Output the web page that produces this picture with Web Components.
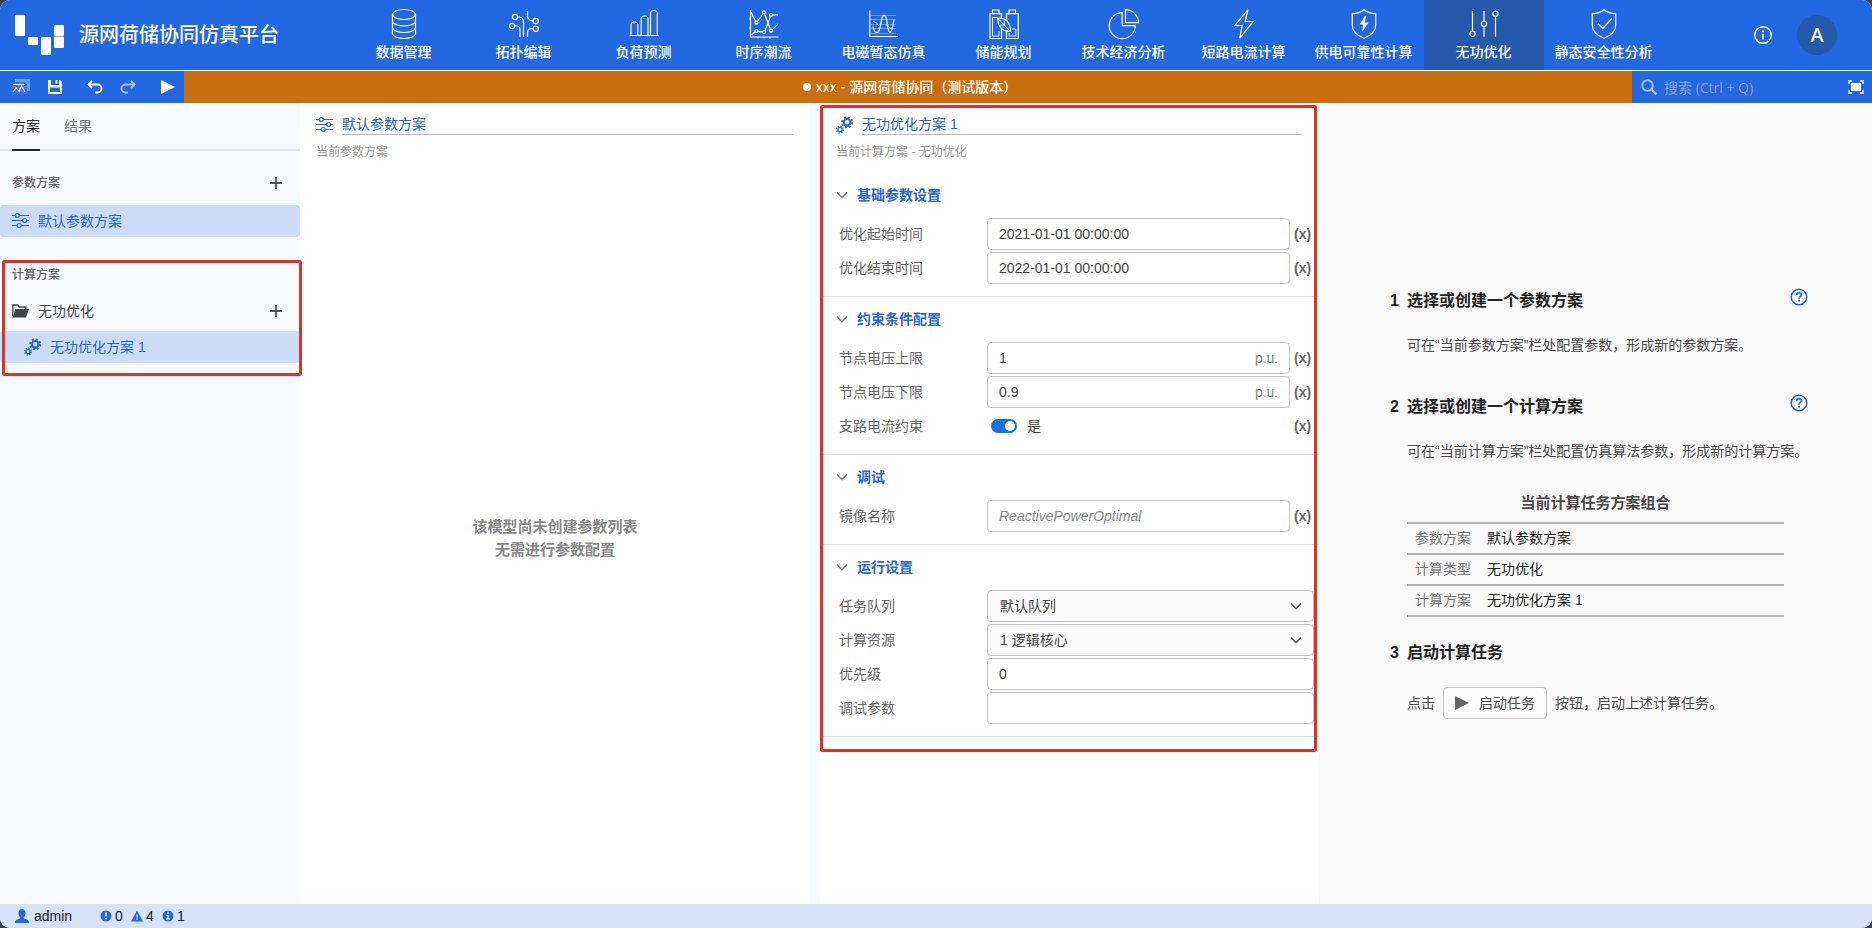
<!DOCTYPE html>
<html lang="zh-CN">
<head>
<meta charset="utf-8">
<title>源网荷储协同仿真平台</title>
<style>
  html, body { margin: 0; height: 100%; }
  body {
    background: #39424f;
    font-family: "Liberation Sans", "Noto Sans CJK SC", sans-serif;
    font-size: 14px;
    line-height: 20px;
    --brand: #2268e1;
    --brand-dark: #2559ac;
    --link: #2a67c9;
    --pick: #cddcf6;
    --mark: #e0302a;
    --line: #dedede;
  }
</style>
</head>
<body>
<sim-app></sim-app>

<script>
const ICONS = {
  logo: ['0 0 50 40', '<g fill="#fff" stroke="none"><rect width="10" height="21" rx="1"/><rect x="13" y="22" width="10" height="8" rx="1"/><rect x="26" y="22" width="10" height="18" rx="1"/><rect x="39" y="10" width="10" height="11" rx="1"/><rect x="39" y="21.500" width="10" height="11.500" rx="1"/></g>'],
  data: ['0 0 30 30', '<ellipse cx="15" cy="5.5" rx="11.5" ry="5"/><path d="M3.500 5.500v19c0 2.800 5.100 5 11.500 5s11.500-2.200 11.500-5v-19M3.500 12c0 2.800 5.100 5 11.500 5s11.500-2.200 11.500-5M3.500 18.500c0 2.800 5.100 5 11.500 5s11.500-2.200 11.500-5"/>'],
  topology: ['0 0 30 30', '<circle cx="6" cy="8" r="2.600"/><circle cx="3.100" cy="17" r="2.600"/><circle cx="26.700" cy="12" r="2.600"/><circle cx="26.700" cy="19.700" r="2.600"/><path d="M8.600 8h1.500q4.400.5 4.400 5v15M5.700 17H8q3 .5 3 4v7M18.500 2v6.500l2.500 2.800 3.100.7M24.100 19.700h-2q-3.600.5-3.600 4V28"/>'],
  bars: ['0 0 30 30', '<path d="M.5 26.500h29M2 26.500V16q0-3 3.400-3T8.800 16v10.500M12.200 26.500V10q0-3 3.400-3T19 10v16.500M21.500 26.500v-22q0-3 3.400-3t3.400 3v22"/>'],
  series: ['0 0 30 30', '<path d="M1.500 1v27h28M9 28v1.500M15 28v1.500M21 28v1.500M.5 10h1M.5 19h1M2 3l4.600 9.500M8.400 12.500 14.200 4.500M15.600 4.700 21.400 20.500M23.200 20.800 29 15M2 26l4.500-3.200M9 22.300l4.500.7M16 22 21.500 7.400M23.700 6H29"/><circle cx="7.500" cy="13.700" r="1.500"/><circle cx="15" cy="3.300" r="1.500"/><circle cx="22" cy="21.700" r="1.500"/><circle cx="7.500" cy="22" r="1.500"/><circle cx="15" cy="23.200" r="1.500"/><circle cx="22" cy="6" r="1.500"/>'],
  wave: ['0 0 30 30', '<path d="M.8 1.500v26H29"/><path stroke-width=".5" opacity=".6" d="M2 6.500h25M2 10.500h25M2 15.500h25M2 19.500h25M2 24.500h25"/><path d="M4 17.500c.8 4 2 6.200 4 6.200 4.500 0 3.200-17.500 7-17.500s3 17.300 6 17.300c2.200 0 3-7.500 4-13"/><path stroke-width=".9" d="M4.500 12.500q3.500.5 5.500 4.500M17.500 16.500q2 .5 3 2t3.500 0"/>'],
  battery: ['0 0 30 30', '<path d="M1 4.700h11.500v24.800H1ZM17.500 4.700h11.800v24.800H17.500ZM3.500 4.500V1h6.500v3.500M20 4.500V1h6.500v3.500"/><path stroke-width=".9" d="M8.500 8.500h-5V27H10v-5M26.800 20v7H20v-3M23 20h3.800"/><path style="fill:var(--brand)" d="M8.800 9.200c8-.6 12.700 4.300 12.700 12.800-8 1-12.700-4.500-12.700-12.800Z"/><path stroke-width=".9" d="m9 9.500 14 14.500M15.500 11.500v4.700h-4.200"/>'],
  pie: ['0 0 30 30', '<path d="M13.200 3.700a13 13 0 1 0 13 13h-13ZM16.500.7v13h13a13 13 0 0 0-13-13Z"/>'],
  bolt: ['0 0 30 30', '<path d="M18.800.8 5.800 16.500h7.400l-2.400 12.700L24.200 12.500h-8Z"/>'],
  shieldBolt: ['0 0 30 30', '<path d="M15 .8q4.500 3.700 11.700 4v11q0 9-11.700 13.500Q3.300 24.800 3.300 15.800v-11Q10.500 4.500 15 .8Z"/><path fill="currentColor" stroke="none" d="m16 7-5.500 8.500h3.700L13 23l6.500-9.500h-4L17.500 7Z"/>'],
  sliders: ['0 0 30 30', '<circle cx="3.500" cy="24.700" r="2.600"/><circle cx="15" cy="14.700" r="2.600"/><circle cx="26.500" cy="4.700" r="2.600"/><path d="M3.500 2v20M15 2v10M15 17.300v10.500M26.500 7.300v20.500"/>'],
  shieldCheck: ['0 0 30 30', '<path d="M15 .8q4.500 3.700 11.700 4v11q0 9-11.700 13.500Q3.300 24.800 3.300 15.800v-11Q10.500 4.500 15 .8ZM9 14.500l4.800 5 9-10"/>'],
  info: ['0 0 20 20', '<circle cx="10" cy="10" r="8.300" stroke-width="1.500"/><path stroke-width="1.800" d="M10 8.800v5.700M10 5.500v1.800"/>'],
  app: ['0 0 20 18', '<path fill="#5fa4f6" stroke="none" d="M4 1h15v12h-3V4H4Z"/><path fill="#3f6fee" stroke="none" d="M1 4h15v12H1Z"/><path stroke="#fff" stroke-width="1.200" d="M2 6.500h12M2 14l3-4 3 3 2.500-5 3.500 6"/>'],
  save: ['0 0 14 14', '<path fill="currentColor" stroke="none" fill-rule="evenodd" d="M0 0h3v5h8V0h1l2 2v12H0ZM7.500 0h2v3.500h-2ZM2 7.500V12h10V7.500Z"/>'],
  undo: ['0 0 16 14', '<path stroke-width="1.900" d="M5 1 1.500 4.500 5 8M1.500 4.500h9a4 4 0 0 1 0 8H8"/>'],
  redo: ['0 0 16 14', '<path stroke-width="1.900" d="m11 1 3.500 3.500L11 8M14.500 4.500h-9a4 4 0 0 0 0 8H8"/>'],
  play: ['0 0 14 14', '<path fill="currentColor" stroke="none" d="M0 0v14l14-7Z"/>'],
  search: ['0 0 16 16', '<circle cx="6.500" cy="6.500" r="5.300" stroke-width="2"/><path stroke-width="2.400" d="m10.500 10.500 4.800 4.800"/>'],
  screen: ['0 0 16 14', '<path stroke-width="1.300" d="M1 4V1h3M12 1h3v3M15 10v3h-3M4 13H1v-3"/><path fill="currentColor" stroke="none" d="M3 3h10v8H3Z"/>'],
  params: ['0 0 17 16', '<path stroke-width="1.100" d="M0 2.500h3.200M7.200 2.500H17M0 7.500h10.700M14.700 7.500H17M0 12.500h5.200M9.200 12.500H17"/><g stroke-width="1.100"><circle cx="5.200" cy="2.500" r="2"/><circle cx="12.700" cy="7.500" r="2"/><circle cx="7.200" cy="12.500" r="2"/></g>'],
  folder: ['0 0 17 14', '<path stroke-width="1.300" d="M.8 12V1h5l1.500 2h6.500v2"/><path fill="currentColor" stroke="none" d="M3.500 5H17l-3 8.500H.5Z"/>'],
  gears: ['0 0 18 18', '<circle cx="11.800" cy="6.200" r="3.500" stroke-width="2.200"/><circle cx="11.800" cy="6.200" r="5.200" stroke-width="2.200" stroke-dasharray="2.100 1.984"/><circle cx="4.200" cy="13.800" r="2.200" stroke-width="1.400"/><circle cx="4.200" cy="13.800" r="3.500" stroke-width="1.500" stroke-dasharray="1.400 1.349"/>'],
  plus: ['0 0 12 12', '<path stroke-width="1.800" d="M6 0v12M0 6h12"/>'],
  chevron: ['0 0 12 8', '<path stroke-width="1.600" d="m1 1.500 5 5 5-5"/>'],
  help: ['0 0 18 18', '<circle cx="9" cy="9" r="7.800" stroke-width="1.500"/><path stroke-width="1.700" d="M6.600 7.200c0-3.600 5-3.100 5-.6 0 1.900-2.500 1.700-2.500 3.900M9.100 12v1.800"/>'],
  user: ['0 0 14 14', '<path fill="currentColor" stroke="none" d="M7 0c2.300 0 3.600 1.700 3.600 4 0 1.700-.8 3.400-1.900 4.200v1.100l4 1.600q1.300.6 1.300 3.100H0q0-2.500 1.300-3.100l4-1.600V8.200C4.200 7.400 3.400 5.700 3.400 4 3.400 1.700 4.700 0 7 0Z"/>'],
  error: ['0 0 12 12', '<circle cx="6" cy="6" r="5.500" fill="currentColor" stroke="none"/><path stroke="#d5e2f8" stroke-width="1.800" d="M6 2.500v4M6 7.700v1.800"/>'],
  warn: ['0 0 12 12', '<path fill="currentColor" stroke="none" d="m6 .5 6 11H0Z"/><path stroke="#d5e2f8" stroke-width="1.400" d="M6 4.500v3M6 8.500V10"/>'],
  note: ['0 0 12 12', '<circle cx="6" cy="6" r="5.500" fill="currentColor" stroke="none"/><path stroke="#d5e2f8" stroke-width="1.500" d="M6 2.300v1.600M4.500 5.500H6v3.300M4.300 9h3.500"/>'],
};

/* Registers an element whose shadow root is cloned from a template. */
function component(name, html, ready) {
  const tpl = document.createElement('template');
  tpl.innerHTML = `<style>*{box-sizing:border-box}button,input,select{font:inherit;color:inherit;margin:0}
    button{background:none;border:0;padding:0;cursor:pointer;display:flex;align-items:center;justify-content:center}
    a{color:inherit;text-decoration:none}</style>` + html;
  customElements.define(name, class extends HTMLElement {
    connectedCallback() {
      if (this.shadowRoot) return;
      const root = this.attachShadow({ mode: 'open' });
      const content = tpl.content.cloneNode(true);
      if (ready) ready(this, content);
      root.append(content);
    }
  });
}

component('ui-icon', `<style>
  :host { display: inline-flex; flex: none; width: 16px; height: 16px; }
  svg { width: 100%; height: 100%; fill: none; stroke: currentColor; stroke-width: 1.2; overflow: visible; }
</style><svg aria-hidden="true"></svg>`, (el, root) => {
  const svg = root.querySelector('svg');
  const [box, art] = ICONS[el.getAttribute('name')];
  svg.setAttribute('viewBox', box);
  svg.innerHTML = art;
});

component('nav-item', `<style>
  :host { display: block; flex: 0 1 120px; }
  a { display: flex; flex-direction: column; align-items: center; gap: 3px; height: 70px; padding: 9px 1px 0 0;
      color: #fff; font-weight: 500; white-space: nowrap; }
  :host([active]) a { background: var(--brand-dark); }
  ui-icon { width: 30px; height: 30px; }
</style><a href="#"><ui-icon></ui-icon><span><slot></slot></span></a>`, (el, root) => {
  root.querySelector('ui-icon').setAttribute('name', el.getAttribute('icon'));
});

component('app-header', `<style>
  :host { display: flex; height: 71px; background: var(--brand); border-bottom: 1px solid #fff; color: #fff; }
  .brand { display: flex; align-items: center; gap: 14px; flex: 0 0 344px; padding-left: 15px; }
  .brand ui-icon { width: 50px; height: 40px; }
  h1 { margin: 0; font-size: 20px; line-height: 28px; font-weight: 500; }
  nav { display: flex; flex: 1; }
  .tools { display: flex; align-items: center; gap: 24px; padding-right: 35px; }
  .tools ui-icon { width: 20px; height: 20px; }
  .avatar { width: 40px; height: 40px; border-radius: 50%; background: var(--brand-dark);
            font-family: "Noto Sans"; font-size: 20px; line-height: 28px; font-weight: 500; }
</style>
<div class="brand"><ui-icon name="logo"></ui-icon><h1>源网荷储协同仿真平台</h1></div>
<nav>
  <nav-item icon="data">数据管理</nav-item>
  <nav-item icon="topology">拓扑编辑</nav-item>
  <nav-item icon="bars">负荷预测</nav-item>
  <nav-item icon="series">时序潮流</nav-item>
  <nav-item icon="wave">电磁暂态仿真</nav-item>
  <nav-item icon="battery">储能规划</nav-item>
  <nav-item icon="pie">技术经济分析</nav-item>
  <nav-item icon="bolt">短路电流计算</nav-item>
  <nav-item icon="shieldBolt">供电可靠性计算</nav-item>
  <nav-item icon="sliders" active>无功优化</nav-item>
  <nav-item icon="shieldCheck">静态安全性分析</nav-item>
</nav>
<div class="tools">
  <button aria-label="关于"><ui-icon name="info"></ui-icon></button>
  <button class="avatar">A</button>
</div>`);

component('app-toolbar', `<style>
  :host { display: flex; height: 32px; background: #c96f10; color: #fff; }
  .actions { display: flex; align-items: center; gap: 25px; width: 184px; padding-left: 11px; background: var(--brand); }
  .actions ui-icon { width: 16px; height: 14px; }
  .actions .app { width: 20px; height: 18px; }
  .actions .square { width: 14px; }
  .actions .pair { display: flex; align-items: center; gap: 17px; }
  .actions button[disabled] { opacity: .6; }
  .title { flex: 1; display: flex; align-items: center; justify-content: center; gap: 5px; padding-left: 4px; font-weight: 500; }
  .title i { width: 8px; height: 8px; border-radius: 50%; background: #fff; }
  .search { display: flex; align-items: center; width: 240px; padding: 0 8px 0 9px; background: var(--brand); color: #a5bfec; }
  .search label { display: flex; padding-right: 7px; }
  input { flex: 1; min-width: 0; height: 24px; margin-right: 16px; padding: 0; border: 0; outline: 0; background: none;
          font-family: "Open Sans", "Noto Sans CJK SC", sans-serif; }
  input::placeholder { color: #8f9fc4; opacity: 1; }
  .search button { color: #fff; }
  .search button ui-icon { height: 14px; }
</style>
<div class="actions">
  <div class="pair">
    <button aria-label="应用"><ui-icon class="app" name="app"></ui-icon></button>
    <button aria-label="保存"><ui-icon class="square" name="save"></ui-icon></button>
  </div>
  <div class="pair">
    <button aria-label="撤销"><ui-icon name="undo"></ui-icon></button>
    <button aria-label="重做" disabled><ui-icon name="redo"></ui-icon></button>
  </div>
  <button aria-label="运行"><ui-icon class="square" name="play"></ui-icon></button>
</div>
<div class="title"><i></i><span>xxx - 源网荷储协同（测试版本）</span></div>
<div class="search">
  <label for="q" aria-label="搜索"><ui-icon name="search"></ui-icon></label>
  <input id="q" type="text" placeholder="搜索 (Ctrl + Q)">
  <button aria-label="全屏"><ui-icon name="screen"></ui-icon></button>
</div>`);

component('mark-box', `<style>
  :host { position: absolute; border: 3px solid var(--mark); border-radius: 3px; box-sizing: border-box; pointer-events: none; }
</style>`);

component('tree-row', `<style>
  :host { display: flex; align-items: center; box-sizing: border-box; height: 32px; padding: 0 18px 0 12px; color: #444; }
  :host([level="2"]) { padding-left: 24px; }
  :host([picked]) { background: var(--pick); color: var(--link); border-radius: 4px; }
  .main { flex: 1; justify-content: flex-start; gap: 9px; }
</style><button class="main"><slot name="icon"></slot><slot></slot></button><slot name="end"></slot>`);

component('side-panel', `<style>
  :host { display: block; position: relative; background: #f7f9fd; color: #444; }
  .tabs { display: flex; gap: 24px; height: 48px; padding: 0 12px; border-bottom: 2px solid #e6e7ea; color: #777; }
  .tabs button { height: 48px; border-bottom: 2px solid transparent; }
  .tabs [aria-selected=true] { color: #222; border-color: #222; }
  .group { display: flex; align-items: center; justify-content: space-between; height: 32px; padding: 0 18px 0 12px;
           font-size: 12px; font-weight: 500; color: #666; }
  .params { margin-top: 16px; }
  .calcs { margin-top: 22px; }
  tree-row { margin-top: 6px; }
  .calcs + tree-row, .calcs + tree-row + tree-row { margin-top: 4px; }
  ui-icon { width: 17px; }
  ui-icon[name=gears] { height: 18px; }
  .plus { width: 12px; height: 12px; color: #555; }
  mark-box { left: 2px; right: -2px; top: 157px; height: 116px; }
</style>
<div class="tabs" role="tablist">
  <button role="tab" aria-selected="true">方案</button>
  <button role="tab" aria-selected="false">结果</button>
</div>
<div class="group params">参数方案<button aria-label="新建参数方案"><ui-icon class="plus" name="plus"></ui-icon></button></div>
<tree-row picked><ui-icon slot="icon" name="params"></ui-icon>默认参数方案</tree-row>
<div class="group calcs">计算方案</div>
<tree-row><ui-icon slot="icon" name="folder"></ui-icon>无功优化<button slot="end" aria-label="新建计算方案"><ui-icon class="plus" name="plus"></ui-icon></button></tree-row>
<tree-row picked level="2"><ui-icon slot="icon" name="gears"></ui-icon>无功优化方案 1</tree-row>
<mark-box></mark-box>`);

component('scheme-head', `<style>
  :host { display: block; padding: 11px 17px 0 16px; color: #999; font-size: 12px; }
  .top { display: flex; align-items: center; gap: 9px; color: var(--link); font-size: 14px; }
  .name { flex: 1; border-bottom: 1px solid #bbb; }
  .note { padding-top: 7px; }
</style>
<div class="top"><slot name="icon"></slot><div class="name"><slot></slot></div></div>
<div class="note"><slot name="note"></slot></div>`);

component('param-section', `<style>
  :host { display: block; padding-bottom: 12px; border-bottom: 1px solid var(--line); }
  button { gap: 9px; height: 44px; margin-bottom: 1px; padding-left: 16px; color: var(--link); font-weight: 700; }
  ui-icon { width: 12px; height: 8px; color: #888; }
  .rows { display: grid; gap: 2px; }
</style>
<button aria-expanded="true"><ui-icon name="chevron"></ui-icon><span></span></button>
<div class="rows"><slot></slot></div>`, (el, root) => {
  root.querySelector('span').textContent = el.getAttribute('heading');
});

component('param-field', `<style>
  :host { display: grid; grid-template-columns: 148px 1fr 29px; align-items: center; height: 32px; padding-left: 19px; }
  :host([wide]) { grid-template-columns: 148px 1fr; padding-right: 5px; }
  label { padding-bottom: 1px; color: #666; }
  .box { display: flex; align-items: center; height: 32px; border: 1px solid #c4c4c4; border-radius: 4px; color: #444; background: #fff; }
  .box input { flex: 1; min-width: 0; height: 30px; padding: 0 11px 1px; border: 0; outline: 0; background: none; }
  .box input::placeholder { font-style: italic; color: #888; opacity: 1; }
  .unit { padding-right: 11px; color: #888; font-family: Roboto, sans-serif; }
  .pick { background: #fafafa; display: grid; align-items: center; }
  .pick > * { grid-area: 1 / 1; }
  .pick ui-icon { justify-self: end; width: 12px; height: 8px; margin-right: 11px; color: #666; pointer-events: none; }
  select { appearance: none; height: 30px; padding: 0 12px; border: 0; outline: 0; background: none; }
  .toggle { display: flex; align-items: center; gap: 10px; padding-left: 4px; color: #444; }
  .toggle input { appearance: none; width: 26px; height: 14px; border-radius: 7px; background: #999; display: flex; padding: 2px; }
  .toggle input:checked { background: #1a70e0; justify-content: flex-end; }
  .toggle input::before { content: ""; width: 10px; height: 10px; border-radius: 50%; background: #fff; }
  .expr { height: 32px; padding-left: 4px; justify-content: flex-start; color: #666; font-weight: 700; }
</style>
<label for="f"></label>`, (el, root) => {
  const get = k => el.getAttribute(k) || '';
  root.querySelector('label').textContent = get('label');
  const body = {
    select: `<div class="box pick"><select id="f"><option>${get('value')}</option></select><ui-icon name="chevron"></ui-icon></div>`,
    toggle: `<div class="toggle"><input id="f" type="checkbox" role="switch" checked><span>${get('value')}</span></div>`,
  }[get('kind')] || `<div class="box"><input id="f" type="text" value="${get('value')}" placeholder="${get('hint')}">${
    get('unit') ? `<span class="unit">${get('unit')}</span>` : ''}</div>`;
  const t = document.createElement('template');
  t.innerHTML = body + (el.hasAttribute('wide') ? '' : '<button class="expr" title="表达式">(x)</button>');
  root.append(t.content);
});

component('param-panel', `<style>
  :host { display: flex; flex-direction: column; background: #fff; }
  .empty { flex: 1; display: flex; align-items: center; justify-content: center; text-align: center;
           padding-top: 10px; color: #888; font-size: 15px; font-weight: 700; line-height: 23px; }
  ui-icon { width: 17px; }
</style>
<scheme-head><ui-icon slot="icon" name="params"></ui-icon>默认参数方案<span slot="note">当前参数方案</span></scheme-head>
<div class="empty">该模型尚未创建参数列表<br>无需进行参数配置</div>`);

component('calc-panel', `<style>
  :host { display: block; position: relative; background: #fff; }
  .form { padding-top: 11px; }
  ui-icon { width: 17px; height: 18px; }
  mark-box { left: 0; right: 2px; top: 2px; height: 647px; }
</style>
<scheme-head><ui-icon slot="icon" name="gears"></ui-icon>无功优化方案 1<span slot="note">当前计算方案 - 无功优化</span></scheme-head>
<div class="form">
  <param-section heading="基础参数设置">
    <param-field label="优化起始时间" value="2021-01-01 00:00:00"></param-field>
    <param-field label="优化结束时间" value="2022-01-01 00:00:00"></param-field>
  </param-section>
  <param-section heading="约束条件配置">
    <param-field label="节点电压上限" value="1" unit="p.u."></param-field>
    <param-field label="节点电压下限" value="0.9" unit="p.u."></param-field>
    <param-field label="支路电流约束" kind="toggle" value="是"></param-field>
  </param-section>
  <param-section heading="调试">
    <param-field label="镜像名称" hint="ReactivePowerOptimal"></param-field>
  </param-section>
  <param-section heading="运行设置">
    <param-field wide label="任务队列" kind="select" value="默认队列"></param-field>
    <param-field wide label="计算资源" kind="select" value="1 逻辑核心"></param-field>
    <param-field wide label="优先级" value="0"></param-field>
    <param-field wide label="调试参数"></param-field>
  </param-section>
</div>
<mark-box></mark-box>`);

component('guide-step', `<style>
  :host { display: grid; grid-template-columns: 17px 1fr 18px; align-items: start; }
  h2 { margin: 0; font-size: 16px; line-height: 32px; color: #222; }
  .no { color: #222; font-size: 16px; line-height: 32px; font-weight: 700; }
  .help { margin-top: 3px; color: #1f63bd; }
  .help ui-icon { width: 18px; height: 18px; }
  :host([plain]) .help { visibility: hidden; }
  .body { grid-column: 2 / 4; }
</style>
<span class="no"></span><h2></h2><button class="help" aria-label="帮助"><ui-icon name="help"></ui-icon></button>
<div class="body"><slot></slot></div>`, (el, root) => {
  root.querySelector('.no').textContent = el.getAttribute('no');
  root.querySelector('h2').textContent = el.getAttribute('heading');
});

component('guide-panel', `<style>
  :host { display: flex; flex-direction: column; justify-content: center; background: #f9f9f9; color: #4a4a4a; padding: 0 64px 3px 71px; }
  p { margin: 0; line-height: 32px; white-space: nowrap; }
  guide-step p { padding-top: 12px; }
  guide-step + guide-step { margin-top: 30px; }
  table { width: calc(100% - 24px); margin-top: 26px; border-collapse: collapse; }
  caption { padding-bottom: 9px; font-size: 15px; line-height: 20px; font-weight: 700; }
  th, td { height: 31px; padding: 0 8px 2px; text-align: left; border: 2px solid #b3b3b3; border-width: 2px 0; }
  th { width: 72px; font-weight: 400; color: #777; }
  td { color: #222; }
  guide-step + guide-step.last { margin-top: 20px; }
  .run { display: flex; align-items: center; gap: 8px; margin-top: 18px; }
  .run button { gap: 10px; height: 32px; padding: 0 11px; border: 1px solid #c4c4c4; border-radius: 4px; background: #fcfcfc; }
  .run button ui-icon { width: 14px; height: 14px; color: #666; }
</style>
<guide-step no="1" heading="选择或创建一个参数方案"><p>可在“当前参数方案”栏处配置参数，形成新的参数方案。</p></guide-step>
<guide-step no="2" heading="选择或创建一个计算方案">
  <p>可在“当前计算方案”栏处配置仿真算法参数，形成新的计算方案。</p>
  <table>
    <caption>当前计算任务方案组合</caption>
    <tr><th scope="row">参数方案</th><td>默认参数方案</td></tr>
    <tr><th scope="row">计算类型</th><td>无功优化</td></tr>
    <tr><th scope="row">计算方案</th><td>无功优化方案 1</td></tr>
  </table>
</guide-step>
<guide-step class="last" plain no="3" heading="启动计算任务">
  <div class="run"><span>点击</span><button><ui-icon name="play"></ui-icon>启动任务</button><span>按钮，启动上述计算任务。</span></div>
</guide-step>`);

component('status-bar', `<style>
  :host { display: flex; align-items: center; height: 24px; padding-left: 15px; background: #d5e2f8; color: #222; }
  .user { display: flex; align-items: center; gap: 5px; width: 85px; }
  .user ui-icon { width: 14px; height: 14px; }
  ui-icon { width: 12px; height: 12px; color: var(--brand); }
  button { gap: 3px; width: 31px; justify-content: flex-start; }
</style>
<div class="user"><ui-icon name="user"></ui-icon>admin</div>
<button><ui-icon name="error"></ui-icon>0</button>
<button><ui-icon name="warn"></ui-icon>4</button>
<button><ui-icon name="note"></ui-icon>1</button>`);

component('sim-app', `<style>
  :host { display: flex; flex-direction: column; min-height: 100vh; overflow: hidden; border-radius: 10px; background: #f8f9fd; }
  main { flex: 1; display: grid; grid-template-columns: 300px 510fr 10px 499fr 553fr; }
  param-panel { grid-column: 2; }
  calc-panel { grid-column: 4; }
  side-panel { z-index: 1; }
</style>
<app-header></app-header>
<app-toolbar></app-toolbar>
<main><side-panel></side-panel><param-panel></param-panel><calc-panel></calc-panel><guide-panel></guide-panel></main>
<status-bar></status-bar>`);
</script>
</body>
</html>
